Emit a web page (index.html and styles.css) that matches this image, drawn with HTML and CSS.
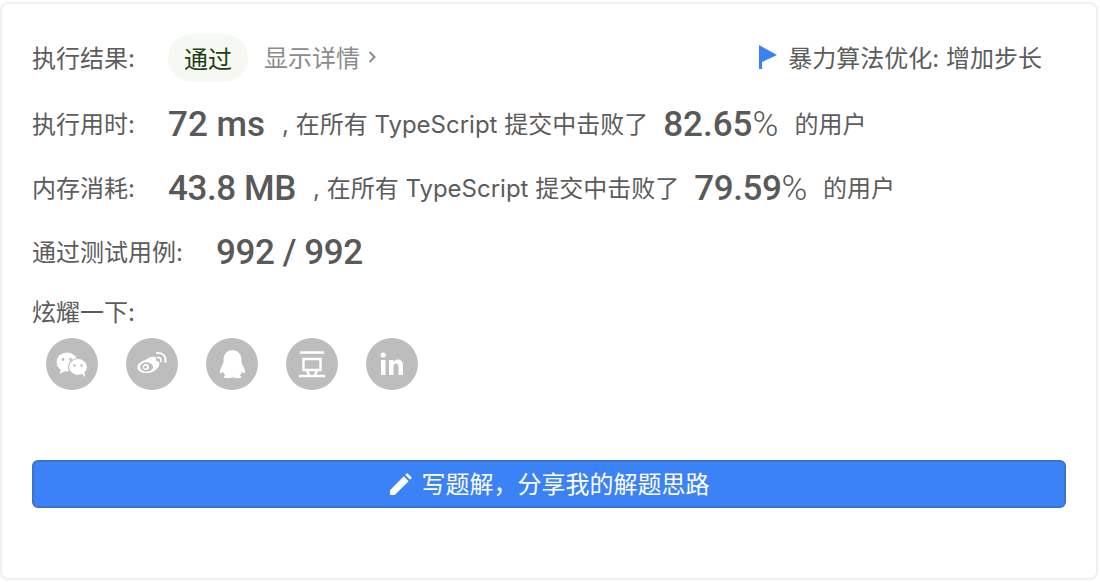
FILE: index.html
```html
<!DOCTYPE html>
<html lang="zh-CN">
<head>
<meta charset="utf-8">
<title>提交结果</title>
<link rel="stylesheet" href="styles.css">
</head>
<body>
<main class="card">
  <div class="row head">
    <span class="label">执行结果:</span>
    <span class="pill">通过</span>
    <a class="details">显示详情<svg class="chev" viewBox="0 0 8 12" width="8" height="12"><path d="M1.500 1 6.500 6l-5 5" fill="none" stroke="currentColor" stroke-width="2"/></svg></a>
    <span class="tag"><svg class="flag" viewBox="0 0 18 24" width="18" height="24"><path d="M0 0 18 10 3 17V24H0Z" fill="#3b82f6"/></svg>暴力算法优化: 增加步长</span>
  </div>
  <div class="row">
    <span class="label">执行用时:</span>
    <b class="big">72 ms</b><span class="txt first">, 在所有 TypeScript 提交中击败了</span><b class="big pct">82.65<i>%</i></b><span class="txt last">的用户</span>
  </div>
  <div class="row">
    <span class="label">内存消耗:</span>
    <b class="big tight">43.8 MB</b><span class="txt first">, 在所有 TypeScript 提交中击败了</span><b class="big pct tight">79.59<i>%</i></b><span class="txt last">的用户</span>
  </div>
  <div class="row">
    <span class="label wide">通过测试用例:</span>
    <b class="big tight">992 / 992</b>
  </div>
  <div class="share-title">炫耀一下:</div>
  <div class="share">
    <span class="ico"><svg viewBox="0 0 52 52"><ellipse cx="21" cy="24" rx="10.500" ry="9.500" fill="#fff"/><path d="M15 31l-1.500 5 6-3z" fill="#fff"/><ellipse cx="32" cy="29" rx="9.500" ry="8.500" fill="#fff" stroke="#bdbdbd" stroke-width="1.200"/><path d="M36 36l3 3-.5-5z" fill="#fff"/><circle cx="17" cy="21.500" r="1.400" fill="#bdbdbd"/><circle cx="24.500" cy="21.500" r="1.400" fill="#bdbdbd"/><circle cx="28.500" cy="27.500" r="1.200" fill="#bdbdbd"/><circle cx="35.500" cy="27.500" r="1.200" fill="#bdbdbd"/></svg></span>
    <span class="ico"><svg viewBox="0 0 52 52"><path d="M20 21.500c5-3.500 10-4 10-.5 0 1.500 0 2 1.500 2.300 2.500.7 2.500 3.700.5 6.200-3 4-8 6-13 5.500-5-.5-8-3-7.500-6.500.3-2.500 4-5.500 8.500-7z" fill="#fff"/><ellipse cx="20.500" cy="29" rx="6.500" ry="4.700" fill="#bdbdbd"/><circle cx="20" cy="29" r="3" fill="#fff"/><circle cx="19.500" cy="29.200" r="1.400" fill="#bdbdbd"/><path d="M31 15c5.500-.8 9.500 3.500 8.500 9M31.500 19.500c2.500-.4 4 1.400 3.500 3.800" fill="none" stroke="#fff" stroke-width="1.800" stroke-linecap="round"/></svg></span>
    <span class="ico"><svg viewBox="0 0 52 52"><path d="M26 12c6 0 9.500 4.500 9.500 10 0 2 0 3 1 5 1.500 2.500 3 5.500 2.500 7.500-.3 1.500-2 .5-3-1-.5 2-1.500 3-2.500 4 2 .8 2.500 1.800 1 2.300-3 .8-6 .4-8-.5-2 .9-5.500 1.300-8 .5-1.500-.5-1-1.500 1-2.300-1-1-2-2-2.500-4-1 1.500-2.700 2.500-3 1-.5-2 1-5 2.500-7.500 1-2 1-3 1-5 0-5.500 3.500-10 9-10z" fill="#fff"/></svg></span>
    <span class="ico"><svg viewBox="0 0 52 52"><path d="M14 14.500H38M17.500 21H34.500V32H17.500ZM21 32.500 23 37M31 32.500 29 37M13 38H39" fill="none" stroke="#fff" stroke-width="2.400"/></svg></span>
    <span class="ico"><svg viewBox="0 0 52 52"><rect x="15" y="22" width="4.500" height="15" fill="#fff"/><circle cx="17.200" cy="17" r="2.600" fill="#fff"/><path d="M23 22h4.300v2c1-1.500 2.500-2.400 4.500-2.400 3.500 0 5.200 2.200 5.200 6V37h-4.500v-8.500c0-2-.7-3-2.300-3-1.700 0-2.700 1.100-2.700 3.200V37H23z" fill="#fff"/></svg></span>
  </div>
  <button class="solution"><svg class="pen" viewBox="0 0 24 24" width="23" height="23"><path d="M1 23v-5L15.500 3.500l5 5L6 23zM17 2l2-2 5 5-2 2z" fill="#fff"/></svg><span class="solution-text">写题解，分享我的解题思路</span></button>
</main>
</body>
</html>
```
FILE: styles.css
```css
* { box-sizing: border-box; }
html, body { margin: 0; height: 100%; background: #fff; }
body {
  padding: 2px 2px 2px 0;
  font-family: "Inter", "Noto Sans CJK SC", sans-serif;
  color: #5c5c5c;
}
.card {
  height: 578px;
  border: 2px solid #f0f0f0;
  border-radius: 8px;
  padding: 22px 30px 0;
  background: #fff;
}
.row {
  display: flex;
  align-items: center;
  height: 64px;
  font-size: 24px;
  white-space: nowrap;
}
.label { width: 136px; flex: none; }
.label.wide { width: 184px; }
.head .label, .head .details, .head .tag { margin-bottom: 3px; }
.pill {
  width: 80px;
  height: 48px;
  line-height: 51px;
  text-align: center;
  border-radius: 24px;
  background: #f6f9f3;
  color: #1f4010;
}
.details { margin-left: 16px; color: #8c8c8c; display: flex; align-items: center; }
.chev { margin-left: 8px; }
.tag { margin-left: auto; margin-right: 24px; display: flex; align-items: center; }
.flag { margin-right: 11px; }
.big {
  font-family: "Roboto", sans-serif;
  font-weight: 500;
  font-size: 35px;
  color: #595959;
  margin-top: 4px;
}
.big i { font-style: normal; font-weight: 300; }
.tight { letter-spacing: -.4px; }
.txt.first { margin-left: 17px; }
.pct { margin-left: 15px; }
.txt.last { margin-left: 16px; }
.share-title { font-size: 24px; line-height: 30px; height: 30px; margin-top: 16px; }
.share { display: flex; gap: 28px; margin: 10px 0 0 14px; }
.ico { width: 52px; height: 52px; border-radius: 50%; background: #bdbdbd; display: block; }
.ico svg { display: block; width: 52px; height: 52px; }
.solution {
  display: flex;
  align-items: center;
  justify-content: center;
  width: 100%;
  height: 48px;
  margin-top: 70px;
  padding: 0;
  border: 2px solid #3a72cf;
  border-radius: 6px;
  background: #3b82f6;
  color: #fff;
  font: inherit;
  font-size: 24px;
}
.solution-text { margin-bottom: 3px; }
.pen { margin-right: 10px; }
```
